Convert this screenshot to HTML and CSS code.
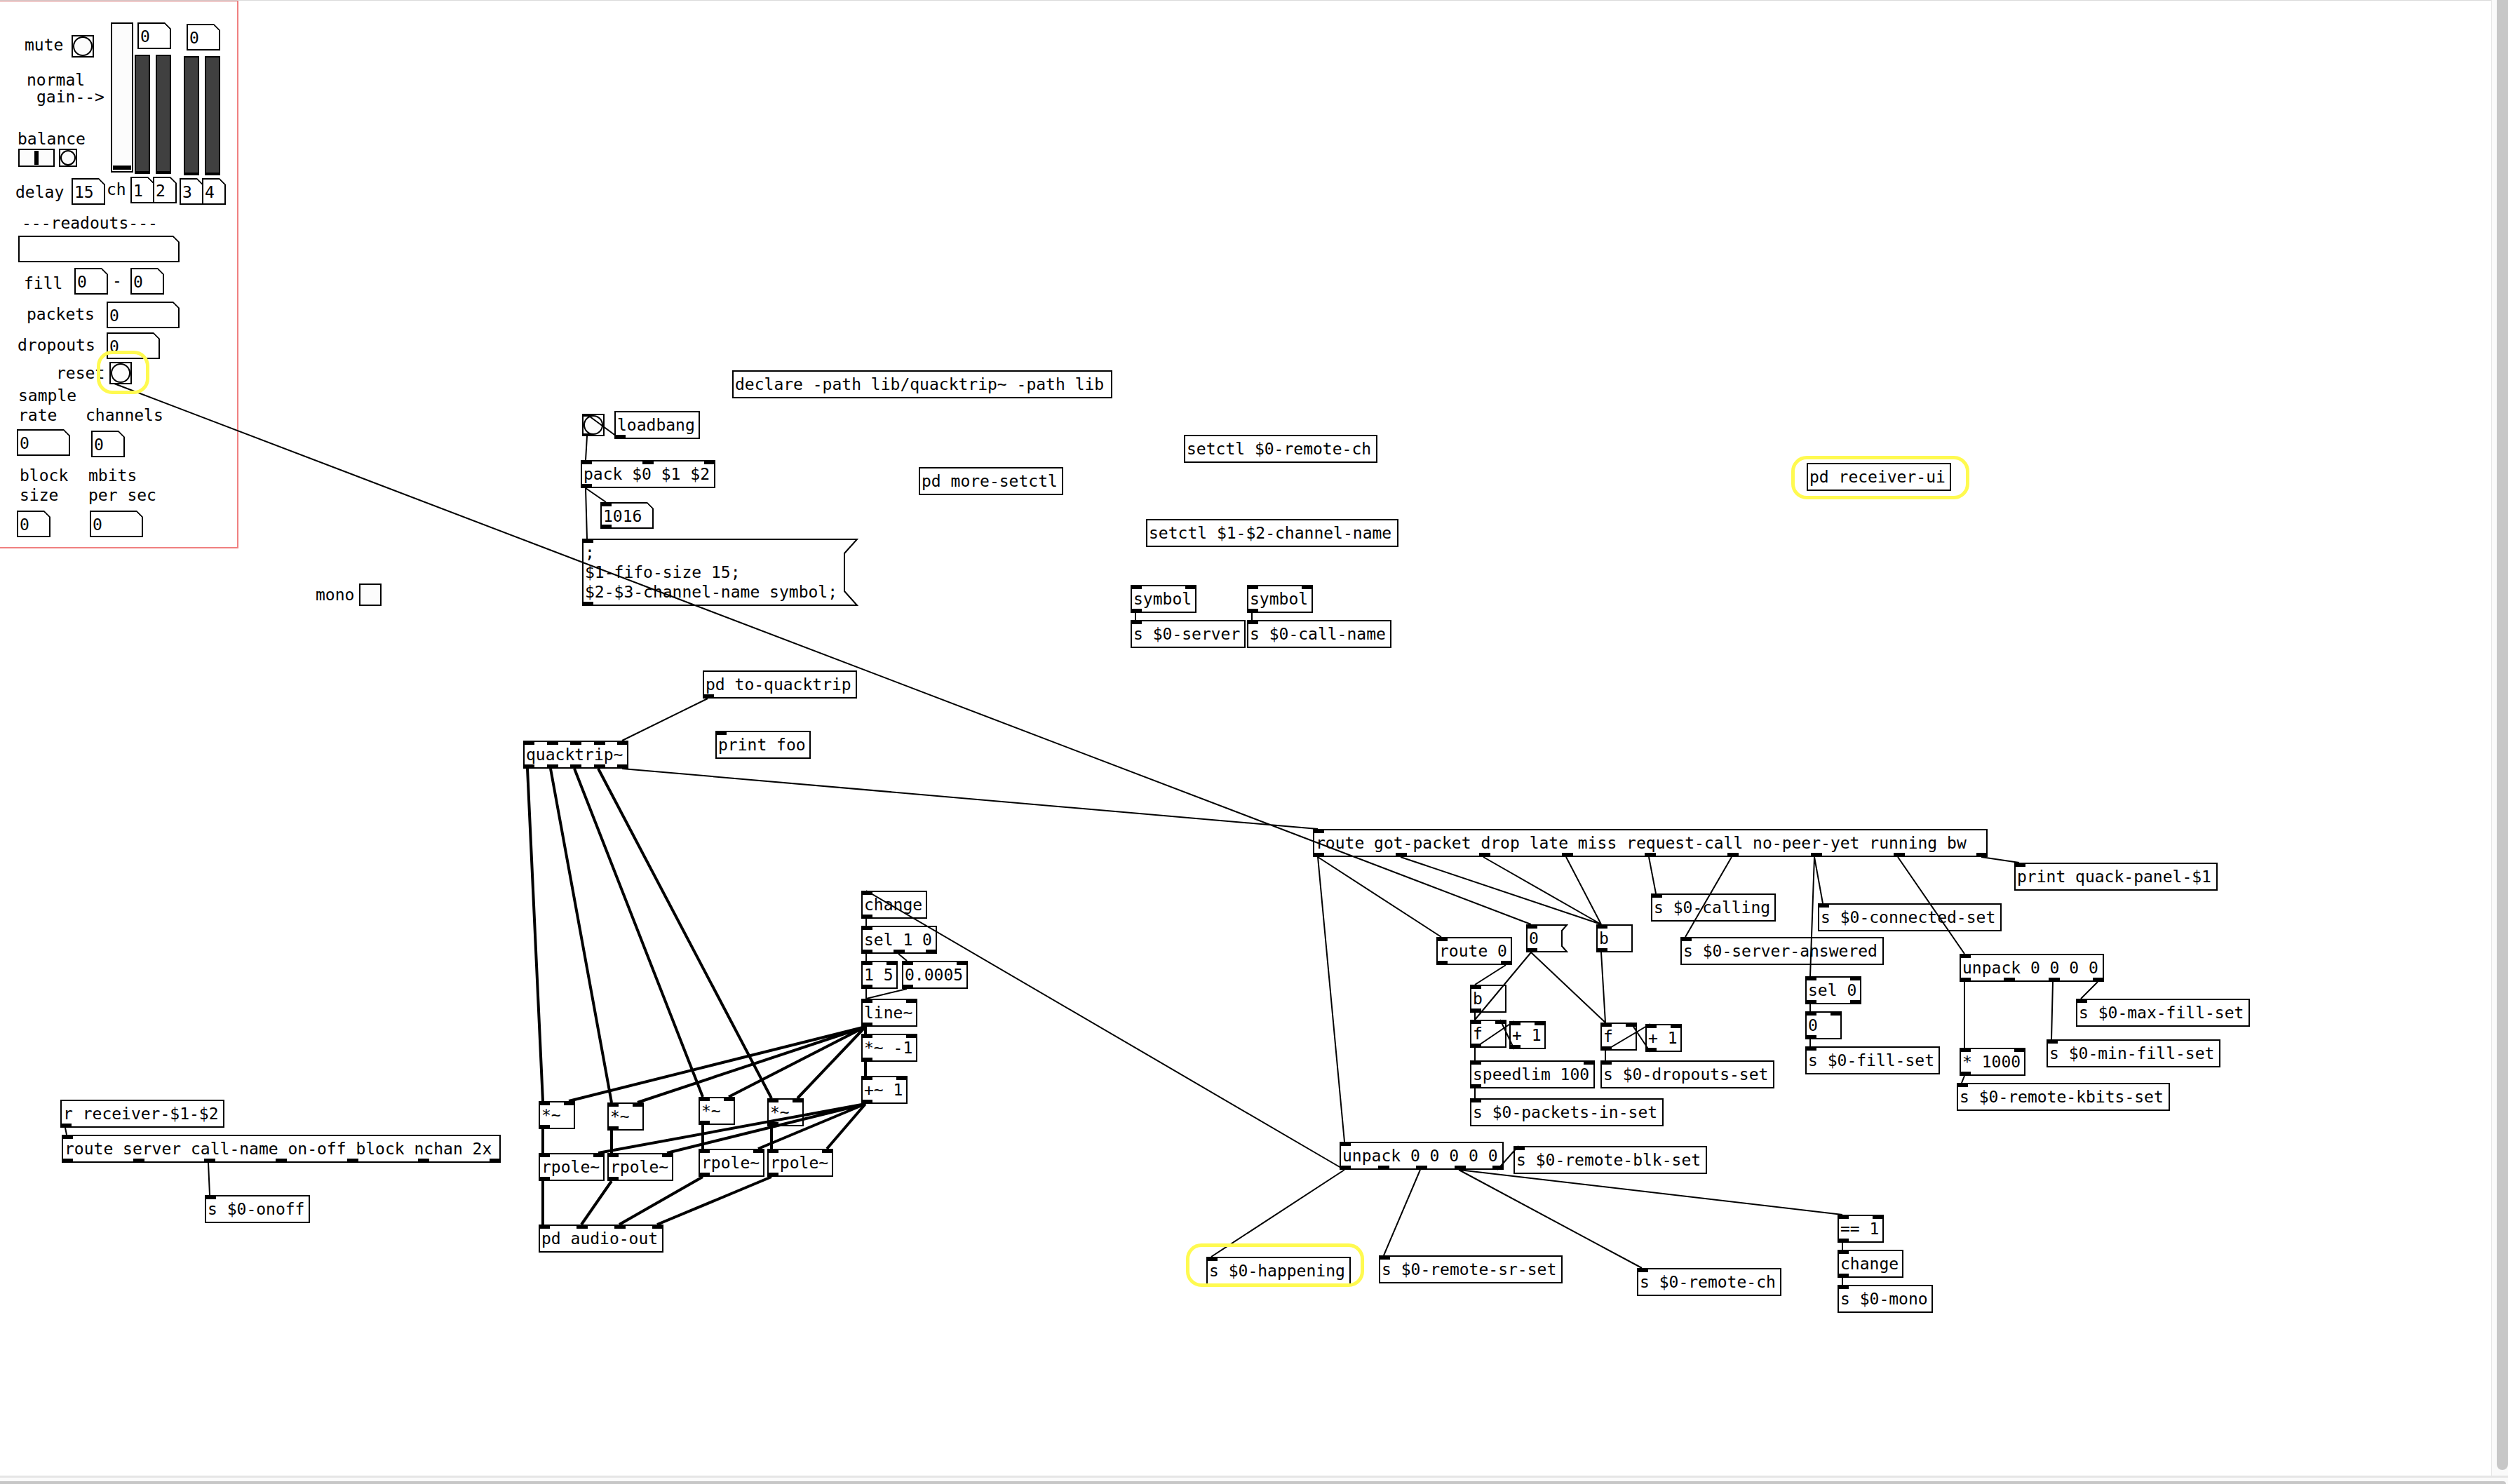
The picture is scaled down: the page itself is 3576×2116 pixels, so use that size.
FILE: index.html
```html
<!DOCTYPE html>
<html lang="en">
<head>
<meta charset="utf-8">
<title>quack-panel</title>
<link rel="stylesheet" href="styles.css">
</head>
<body>
<main class="canvas">

  <section class="panel" aria-label="Receiver controls">
    <label class="text" for="mute" style="left:35px;top:50px">mute</label>
    <button class="bang" id="mute" aria-label="mute" style="left:102px;top:50px"></button>
    <label class="text" for="gain" style="left:38px;top:100px">normal</label>
    <label class="text" for="gain" style="left:52px;top:124px">gain--&gt;</label>
    <input class="slider slider-v" id="gain" type="range" min="0" max="100" value="0" style="left:158px;top:32px">
    <label class="text" for="balance" style="left:25px;top:184px">balance</label>
    <input class="slider slider-h" id="balance" type="range" min="0" max="100" value="50" style="left:26px;top:212px">
    <button class="bang bang-small" aria-label="center balance" style="left:84px;top:212px"></button>

    <div class="num" style="left:196px;top:32px;width:48px"><input aria-label="level 1" value="0"></div>
    <div class="num" style="left:266px;top:34px;width:48px"><input aria-label="level 2" value="0"></div>
    <div class="vu" style="left:192px;top:78px"></div>
    <div class="vu" style="left:222px;top:78px"></div>
    <div class="vu" style="left:262px;top:80px"></div>
    <div class="vu" style="left:292px;top:80px"></div>

    <label class="text" for="delay" style="left:22px;top:260px">delay</label>
    <div class="num" style="left:102px;top:254px;width:48px"><input id="delay" value="15"></div>
    <label class="text" for="ch1" style="left:152px;top:256px">ch</label>
    <div class="num" style="left:186px;top:252px;width:34px"><input id="ch1" value="1"></div>
    <div class="num" style="left:218px;top:252px;width:34px"><input aria-label="ch 2" value="2"></div>
    <div class="num" style="left:256px;top:254px;width:34px"><input aria-label="ch 3" value="3"></div>
    <div class="num" style="left:288px;top:254px;width:34px"><input aria-label="ch 4" value="4"></div>

    <label class="text" for="status" style="left:31px;top:304px">---readouts---</label>
    <div class="num" style="left:26px;top:336px;width:230px"><input id="status" value=""></div>
    <label class="text" for="fillmin" style="left:34px;top:390px">fill</label>
    <div class="num" style="left:106px;top:382px;width:48px"><input id="fillmin" value="0"></div>
    <label class="text" for="fillmax" style="left:160px;top:386px">-</label>
    <div class="num" style="left:186px;top:382px;width:48px"><input id="fillmax" value="0"></div>
    <label class="text" for="packets" style="left:38px;top:434px">packets</label>
    <div class="num" style="left:152px;top:430px;width:104px"><input id="packets" value="0"></div>
    <label class="text" for="dropouts" style="left:25px;top:478px">dropouts</label>
    <div class="num" style="left:152px;top:474px;width:76px"><input id="dropouts" value="0"></div>
    <label class="text" for="reset" style="left:80px;top:518px">reset</label>
    <button class="bang" id="reset" aria-label="reset" style="left:156px;top:516px"></button>
    <label class="text" for="rate" style="left:26px;top:550px">sample<br>rate</label>
    <label class="text" for="channels" style="left:122px;top:578px">channels</label>
    <div class="num" style="left:24px;top:612px;width:76px"><input id="rate" value="0"></div>
    <div class="num" style="left:130px;top:614px;width:48px"><input id="channels" value="0"></div>
    <label class="text" for="block" style="left:28px;top:664px">block<br>size</label>
    <label class="text" for="mbits" style="left:126px;top:664px">mbits<br>per sec</label>
    <div class="num" style="left:24px;top:728px;width:48px"><input id="block" value="0"></div>
    <div class="num" style="left:128px;top:728px;width:76px"><input id="mbits" value="0"></div>
  </section>

  <label class="text" for="mono" style="left:450px;top:834px">mono</label>
  <input class="toggle" id="mono" type="checkbox" style="left:512px;top:832px">

  <div class="obj" style="left:1044px;top:528px;width:542px">declare -path lib/quacktrip~ -path lib</div>
  <button class="bang" aria-label="bang" style="left:830px;top:590px"><span class="in"><i></i></span><span class="out"><i></i></span></button>
  <div class="obj" style="left:876px;top:586px;width:122px">loadbang<span class="out"><i></i></span></div>
  <div class="obj" style="left:828px;top:656px;width:192px">pack $0 $1 $2<span class="in"><i></i><i></i><i></i></span><span class="out"><i></i></span></div>
  <div class="num" style="left:856px;top:716px;width:76px"><input aria-label="instance" value="1016"><span class="in"><i></i></span><span class="out"><i></i></span></div>
  <div class="obj msg" style="left:830px;top:768px;width:394px;height:96px">
    <svg class="outline" width="394" height="96" aria-hidden="true"><path d="M1 1H392L374 21V75L392 95H1Z"/></svg>;<br>$1-fifo-size 15;<br>$2-$3-channel-name symbol;<span class="in"><i></i></span><span class="out"><i></i></span></div>

  <div class="obj" style="left:1310px;top:666px;width:206px">pd more-setctl</div>
  <div class="obj" style="left:1688px;top:620px;width:276px">setctl $0-remote-ch</div>
  <div class="obj" style="left:1634px;top:740px;width:360px">setctl $1-$2-channel-name</div>
  <div class="obj" style="left:2576px;top:660px;width:206px">pd receiver-ui</div>
  <div class="obj" style="left:1612px;top:834px;width:94px">symbol<span class="in"><i></i><i></i></span><span class="out"><i></i></span></div>
  <div class="obj" style="left:1778px;top:834px;width:94px">symbol<span class="in"><i></i><i></i></span><span class="out"><i></i></span></div>
  <div class="obj" style="left:1612px;top:884px;width:164px">s $0-server<span class="in"><i></i></span></div>
  <div class="obj" style="left:1778px;top:884px;width:206px">s $0-call-name<span class="in"><i></i></span></div>

  <div class="obj" style="left:1002px;top:956px;width:220px">pd to-quacktrip<span class="out"><i></i></span></div>
  <div class="obj" style="left:1020px;top:1042px;width:136px">print foo<span class="in"><i></i></span></div>
  <div class="obj" style="left:746px;top:1056px;width:150px">quacktrip~<span class="in"><i></i><i></i><i></i><i></i><i></i></span><span class="out"><i></i><i></i><i></i><i></i><i></i></span></div>

  <div class="obj" style="left:1228px;top:1270px;width:94px">change<span class="in"><i></i></span><span class="out"><i></i></span></div>
  <div class="obj" style="left:1228px;top:1320px;width:108px">sel 1 0<span class="in"><i></i></span><span class="out"><i></i><i></i><i></i></span></div>
  <div class="obj" style="left:1228px;top:1370px;width:52px">1 5<span class="in"><i></i><i></i></span><span class="out"><i></i></span></div>
  <div class="obj" style="left:1286px;top:1370px;width:94px">0.0005<span class="in"><i></i><i></i></span><span class="out"><i></i></span></div>
  <div class="obj" style="left:1228px;top:1424px;width:80px">line~<span class="in"><i></i><i></i></span><span class="out"><i></i></span></div>
  <div class="obj" style="left:1228px;top:1474px;width:80px">*~ -1<span class="in"><i></i><i></i></span><span class="out"><i></i></span></div>
  <div class="obj" style="left:1228px;top:1534px;width:66px">+~ 1<span class="in"><i></i><i></i></span><span class="out"><i></i></span></div>

  <div class="obj" style="left:768px;top:1570px;width:52px">*~<span class="in"><i></i><i></i></span><span class="out"><i></i></span></div>
  <div class="obj" style="left:866px;top:1572px;width:52px">*~<span class="in"><i></i><i></i></span><span class="out"><i></i></span></div>
  <div class="obj" style="left:996px;top:1564px;width:52px">*~<span class="in"><i></i><i></i></span><span class="out"><i></i></span></div>
  <div class="obj" style="left:1094px;top:1566px;width:52px">*~<span class="in"><i></i><i></i></span><span class="out"><i></i></span></div>
  <div class="obj" style="left:768px;top:1644px;width:94px">rpole~<span class="in"><i></i><i></i></span><span class="out"><i></i></span></div>
  <div class="obj" style="left:866px;top:1644px;width:94px">rpole~<span class="in"><i></i><i></i></span><span class="out"><i></i></span></div>
  <div class="obj" style="left:996px;top:1638px;width:94px">rpole~<span class="in"><i></i><i></i></span><span class="out"><i></i></span></div>
  <div class="obj" style="left:1094px;top:1638px;width:94px">rpole~<span class="in"><i></i><i></i></span><span class="out"><i></i></span></div>
  <div class="obj" style="left:768px;top:1746px;width:178px">pd audio-out<span class="in"><i></i><i></i><i></i><i></i></span></div>

  <div class="obj" style="left:86px;top:1568px;width:234px">r receiver-$1-$2<span class="out"><i></i></span></div>
  <div class="obj" style="left:88px;top:1618px;width:626px">route server call-name on-off block nchan 2x<span class="in"><i></i></span><span class="out"><i></i><i></i><i></i><i></i><i></i><i></i><i></i></span></div>
  <div class="obj" style="left:292px;top:1704px;width:150px">s $0-onoff<span class="in"><i></i></span></div>

  <div class="obj" style="left:1872px;top:1182px;width:962px">route got-packet drop late miss request-call no-peer-yet running bw<span class="in"><i></i></span><span class="out"><i></i><i></i><i></i><i></i><i></i><i></i><i></i><i></i><i></i></span></div>
  <div class="obj" style="left:2354px;top:1274px;width:178px">s $0-calling<span class="in"><i></i></span></div>
  <div class="obj" style="left:2048px;top:1336px;width:108px">route 0<span class="in"><i></i></span><span class="out"><i></i><i></i></span></div>
  <div class="obj msg" style="left:2176px;top:1318px;width:60px">
    <svg class="outline" width="60" height="40" aria-hidden="true"><path d="M1 1H58L51 9V31L58 39H1Z"/></svg>0<span class="in"><i></i></span><span class="out"><i></i></span></div>
  <div class="obj" style="left:2276px;top:1318px;width:52px">b<span class="in"><i></i></span><span class="out"><i></i></span></div>
  <div class="obj" style="left:2396px;top:1336px;width:290px">s $0-server-answered<span class="in"><i></i></span></div>
  <div class="obj" style="left:2096px;top:1404px;width:52px">b<span class="in"><i></i></span><span class="out"><i></i></span></div>
  <div class="obj" style="left:2096px;top:1454px;width:52px">f<span class="in"><i></i><i></i></span><span class="out"><i></i></span></div>
  <div class="obj" style="left:2152px;top:1456px;width:52px">+ 1<span class="in"><i></i><i></i></span><span class="out"><i></i></span></div>
  <div class="obj" style="left:2096px;top:1512px;width:178px">speedlim 100<span class="in"><i></i><i></i></span><span class="out"><i></i></span></div>
  <div class="obj" style="left:2096px;top:1566px;width:276px">s $0-packets-in-set<span class="in"><i></i></span></div>
  <div class="obj" style="left:2282px;top:1458px;width:52px">f<span class="in"><i></i><i></i></span><span class="out"><i></i></span></div>
  <div class="obj" style="left:2346px;top:1460px;width:52px">+ 1<span class="in"><i></i><i></i></span><span class="out"><i></i></span></div>
  <div class="obj" style="left:2282px;top:1512px;width:248px">s $0-dropouts-set<span class="in"><i></i></span></div>

  <div class="obj" style="left:2872px;top:1230px;width:290px">print quack-panel-$1<span class="in"><i></i></span></div>
  <div class="obj" style="left:2592px;top:1288px;width:262px">s $0-connected-set<span class="in"><i></i></span></div>
  <div class="obj" style="left:2574px;top:1392px;width:80px">sel 0<span class="in"><i></i><i></i></span><span class="out"><i></i><i></i></span></div>
  <div class="obj" style="left:2574px;top:1442px;width:52px">0<span class="in"><i></i><i></i></span><span class="out"><i></i></span></div>
  <div class="obj" style="left:2574px;top:1492px;width:192px">s $0-fill-set<span class="in"><i></i></span></div>
  <div class="obj" style="left:2794px;top:1360px;width:206px">unpack 0 0 0 0<span class="in"><i></i></span><span class="out"><i></i><i></i><i></i><i></i></span></div>
  <div class="obj" style="left:2960px;top:1424px;width:248px">s $0-max-fill-set<span class="in"><i></i></span></div>
  <div class="obj" style="left:2918px;top:1482px;width:248px">s $0-min-fill-set<span class="in"><i></i></span></div>
  <div class="obj" style="left:2794px;top:1494px;width:94px">* 1000<span class="in"><i></i><i></i></span><span class="out"><i></i></span></div>
  <div class="obj" style="left:2790px;top:1544px;width:304px">s $0-remote-kbits-set<span class="in"><i></i></span></div>

  <div class="obj" style="left:1910px;top:1628px;width:234px">unpack 0 0 0 0 0<span class="in"><i></i></span><span class="out"><i></i><i></i><i></i><i></i><i></i></span></div>
  <div class="obj" style="left:2158px;top:1634px;width:276px">s $0-remote-blk-set<span class="in"><i></i></span></div>
  <div class="obj" style="left:1720px;top:1792px;width:206px">s $0-happening<span class="in"><i></i></span></div>
  <div class="obj" style="left:1966px;top:1790px;width:262px">s $0-remote-sr-set<span class="in"><i></i></span></div>
  <div class="obj" style="left:2334px;top:1808px;width:206px">s $0-remote-ch<span class="in"><i></i></span></div>
  <div class="obj" style="left:2620px;top:1732px;width:66px">== 1<span class="in"><i></i><i></i></span><span class="out"><i></i></span></div>
  <div class="obj" style="left:2620px;top:1782px;width:94px">change<span class="in"><i></i></span><span class="out"><i></i></span></div>
  <div class="obj" style="left:2620px;top:1832px;width:136px">s $0-mono<span class="in"><i></i></span></div>

  <svg class="wires" aria-hidden="true">
    <!-- control connections -->
    <path class="control" d="M163 547L2183 1318
      M883 625L837 591 M837 622L835 656 M835 696L864 716 M835 696L837 768
      M1619 874V884 M1785 874V884
      M1009 996L887 1056 M887 1096L1879 1182
      M1235 1310V1320 M1235 1360V1370 M1281 1360L1293 1370 M1235 1410V1424 M1293 1410L1235 1424
      M1917 1668L1235 1270
      M93 1608L95 1618 M297 1658L299 1704
      M1879 1222L2055 1336 M1879 1222L1917 1628 M1997 1222L2283 1318 M2115 1222L2283 1318 M2233 1222L2283 1318
      M2351 1222L2361 1274 M2469 1222L2403 1336 M2587 1222L2581 1392 M2587 1222L2599 1288
      M2706 1222L2801 1360 M2825 1222L2879 1230
      M2183 1358L2103 1454 M2183 1358L2289 1458 M2283 1358L2289 1458 M2147 1376L2103 1404
      M2103 1444V1454 M2103 1494L2159 1456 M2159 1496L2139 1454 M2103 1494V1512 M2103 1552V1566
      M2289 1498L2353 1460 M2353 1500L2325 1458 M2289 1498V1512
      M2581 1432V1442 M2581 1482V1492
      M2801 1400V1494 M2927 1400L2925 1482 M2991 1400L2967 1424 M2801 1534L2797 1544
      M1917 1668L1727 1792 M2025 1668L1973 1790 M2080 1668L2341 1808 M2080 1668L2627 1732 M2135 1668L2165 1634
      M2627 1772V1782 M2627 1822V1832"/>
    <!-- signal connections -->
    <path class="signal" d="M752 1096L774 1570 M785 1096L872 1572 M819 1096L1002 1564 M853 1096L1100 1566
      M1234 1464L811 1570 M1234 1464L909 1572 M1234 1464L1039 1564 M1234 1464L1137 1566
      M1234 1464V1474 M1234 1514V1534
      M1234 1574L853 1644 M1234 1574L951 1644 M1234 1574L1081 1638 M1234 1574L1179 1638
      M774 1610V1644 M872 1612V1644 M1002 1604V1638 M1100 1606V1638
      M774 1684V1746 M872 1684L829 1746 M1002 1678L883 1746 M1100 1678L937 1746"/>
  </svg>

  <div class="mark" style="left:138px;top:500px;width:75px;height:62px"></div>
  <div class="mark" style="left:2554px;top:650px;width:254px;height:62px"></div>
  <div class="mark" style="left:1691px;top:1773px;width:254px;height:62px"></div>
</main>
<div class="scroll-v"></div>
<div class="scroll-h"></div>
</body>
</html>
```
FILE: styles.css
```css
*,
*::before {
  box-sizing: border-box;
}

body {
  margin: 0;
  height: 100vh;
  display: grid;
  grid-template-columns: 1fr 24px;
  grid-template-rows: 1fr 12px;
  background: #fafafa;
  color: #000;
  font: 23px/28px "DejaVu Sans Mono", monospace;
}

.canvas {
  position: relative;
  overflow: hidden;
  background: #fff;
  border-top: 1px solid #dadada;
}

/* graph-on-parent area */
.panel {
  position: absolute;
  left: 0;
  top: -1px;
  width: 340px;
  height: 782px;
  border: solid #f08080;
  border-width: 2px 2px 2px 0;
  border-top-color: #d46060;
}

.panel > * {
  margin-top: -2px;
}

.canvas > .obj,
.canvas > .num,
.canvas > .bang,
.canvas > .toggle,
.canvas > .text,
.canvas > .mark {
  margin-top: -1px;
}

.text {
  position: absolute;
  white-space: pre;
}

.obj {
  position: absolute;
  height: 40px;
  padding: 4px 0 0 2px;
  border: 2px solid #000;
  background: #fff;
  white-space: nowrap;
}

.msg {
  isolation: isolate;
  border-color: transparent;
  background: none;
}

.outline {
  position: absolute;
  left: -2px;
  top: -2px;
  z-index: -1;
  fill: #fff;
  stroke: #000;
  stroke-width: 2;
}

.in,
.out {
  position: absolute;
  left: -2px;
  right: -2px;
  display: flex;
  justify-content: space-between;
}

.in {
  top: -2px;
}

.out {
  bottom: -2px;
}

.in i,
.out i {
  width: 16px;
  height: 6px;
  background: #000;
}

.num {
  position: absolute;
  height: 38px;
  border: 2px solid #000;
  background: linear-gradient(225deg, #000 8px, #fff 8px) border-box;
  clip-path: polygon(0 0, calc(100% - 9px) 0, 100% 9px, 100% 100%, 0 100%);
}

.num input {
  display: block;
  width: 100%;
  height: 34px;
  margin: 0;
  padding: 2px 0 0 2px;
  border: 0;
  background: none;
  color: inherit;
  font: inherit;
}

.bang {
  position: absolute;
  width: 32px;
  height: 32px;
  padding: 0;
  border: 2px solid #000;
  background: #fff;
}

.bang::before {
  content: "";
  display: block;
  width: 28px;
  height: 28px;
  border: 2px solid #000;
  border-radius: 50%;
  background: #fcfcfc;
}

.bang-small {
  width: 26px;
  height: 26px;
}

.bang-small::before {
  width: 22px;
  height: 22px;
}

.bang .in i,
.bang .out i {
  height: 4px;
}

.toggle {
  appearance: none;
  position: absolute;
  width: 32px;
  height: 32px;
  margin: 0;
  border: 2px solid #000;
  background: #fcfcfc;
}

.slider {
  appearance: none;
  position: absolute;
  margin: -2px 0 0;
  border: 2px solid #000;
  background: #fcfcfc;
}

.slider-v {
  width: 32px;
  height: 214px;
  padding: 2px 1px;
  writing-mode: vertical-lr;
  direction: rtl;
}

.slider-h {
  width: 52px;
  height: 26px;
  padding: 1px 2px;
}

.slider::-webkit-slider-thumb {
  appearance: none;
  border-radius: 0;
  background: #000;
}

.slider-v::-webkit-slider-thumb {
  width: 26px;
  height: 6px;
}

.slider-h::-webkit-slider-thumb {
  width: 6px;
  height: 20px;
}

.vu {
  position: absolute;
  width: 22px;
  height: 170px;
  border: 2px solid #000;
  border-bottom-width: 4px;
  background: #404040;
}

.wires {
  position: absolute;
  left: 0;
  top: -1px;
  width: 100%;
  height: 100%;
  fill: none;
  stroke: #000;
  pointer-events: none;
}

.control {
  stroke-width: 2;
}

.signal {
  stroke-width: 4;
}

.mark {
  position: absolute;
  border: 5px solid #fffa50;
  border-radius: 22px;
  pointer-events: none;
}

.scroll-v {
  padding-bottom: 8px;
  border-left: 1px solid #e7e7e7;
  display: flex;
  justify-content: flex-end;
}

.scroll-v::before {
  content: "";
  width: 16px;
  border-radius: 0 0 8px 8px;
  background: #c7c7c7;
}

.scroll-h {
  grid-column: 1 / -1;
  padding: 5px 3px 0 0;
  border-top: 3px solid #e5e5e5;
}

.scroll-h::before {
  content: "";
  display: block;
  height: 4px;
  border-top-right-radius: 8px;
  background: #c7c7c7;
}
```
